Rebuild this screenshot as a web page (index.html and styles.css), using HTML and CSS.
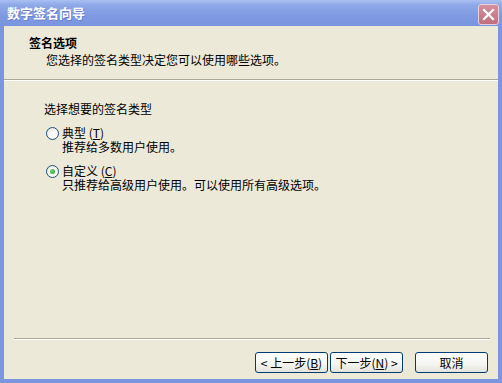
FILE: index.html
```html
<!DOCTYPE html>
<html lang="zh-CN">
<head>
    <meta charset="UTF-8">
    <title>数字签名向导</title>
    <link rel="stylesheet" href="styles.css">
</head>
<body>
    <div class="window">
        <div class="titlebar">
            <span class="title">数字签名向导</span>
            <span class="close">
                <svg width="13" height="13" viewBox="0 0 13 13">
                    <path d="M2 2 L11 11 M11 2 L2 11" stroke="#fff" stroke-width="2.2" stroke-linecap="square"/>
                </svg>
            </span>
        </div>
        <div class="frame">
            <div class="header">
                <h1>签名选项</h1>
                <p>您选择的签名类型决定您可以使用哪些选项。</p>
            </div>
            <div class="content">
                <p class="prompt">选择想要的签名类型</p>
                <label class="option">
                    <span class="radio"></span>
                    <span class="option-text">
                        <span>典型 (<u>T</u>)</span>
                        <span>推荐给多数用户使用。</span>
                    </span>
                </label>
                <label class="option">
                    <span class="radio checked"></span>
                    <span class="option-text">
                        <span>自定义 (<u>C</u>)</span>
                        <span>只推荐给高级用户使用。可以使用所有高级选项。</span>
                    </span>
                </label>
            </div>
            <div class="footer">
                <div class="separator"></div>
                <div class="buttons">
                    <button class="btn">&lt; 上一步(<u>B</u>)</button>
                    <button class="btn">下一步(<u>N</u>) &gt;</button>
                    <button class="btn cancel">取消</button>
                </div>
            </div>
        </div>
    </div>
</body>
</html>
```

FILE: styles.css
```css
body {
    margin: 0;
    padding: 0;
    font-family: "Noto Sans CJK SC", "Liberation Sans", sans-serif;
    font-size: 12px;
    color: #000;
}

.window {
    width: 502px;
    height: 383px;
    display: flex;
    flex-direction: column;
    overflow: hidden;
}

.titlebar {
    height: 26px;
    flex: none;
    display: flex;
    align-items: center;
    justify-content: space-between;
    padding: 0 3px 0 7px;
    background: linear-gradient(to bottom, #a9c0f0 0%, #8ea8e8 20%, #7f9ae1 60%, #7a95df 100%);
    box-sizing: border-box;
}

.title {
    color: #fff;
    font-size: 13px;
    font-weight: bold;
    text-shadow: 1px 1px 0 #6a82c8;
    margin-top: -1px;
}

.close {
    width: 19px;
    height: 19px;
    display: flex;
    align-items: center;
    justify-content: center;
    background: linear-gradient(to bottom, #d4909b, #c0707e);
    border: 1px solid #e8d0dc;
    border-radius: 3px;
    margin-top: 2px;
}

.frame {
    flex: 1;
    display: flex;
    flex-direction: column;
    background-color: #ece9d8;
    border: 4px solid #7b96df;
    border-top: none;
}

.header {
    height: 54px;
    flex: none;
    box-sizing: border-box;
    padding: 10px 0 0 25px;
    border-bottom: 1px solid #aca899;
    box-shadow: 0 1px 0 #fff;
}

.header h1 {
    margin: 0;
    font-size: 12px;
    line-height: 14px;
    font-weight: bold;
}

.header p {
    margin: 3px 0 0 17px;
    line-height: 14px;
}

.content {
    flex: 1;
    padding: 22px 0 0 40px;
}

.prompt {
    margin: 0;
    line-height: 14px;
}

.option {
    display: flex;
    align-items: flex-start;
    gap: 3px;
    margin: 10px 0 0 2px;
}

.option + .option {
    margin-top: 10px;
}

.option-text {
    display: flex;
    flex-direction: column;
    line-height: 14px;
}

.radio {
    width: 11px;
    height: 11px;
    margin-top: 1px;
    border: 1px solid #1c5180;
    border-radius: 50%;
    background: radial-gradient(circle at 60% 60%, #ffffff 30%, #dcdcd5 100%);
    display: flex;
    align-items: center;
    justify-content: center;
    flex: none;
}

.radio.checked::after {
    content: "";
    width: 5px;
    height: 5px;
    border-radius: 50%;
    background: radial-gradient(circle at 40% 40%, #6cd66c, #21a121);
}

.footer {
    flex: none;
    height: 41px;
}

.separator {
    margin: 0 8px 0 10px;
    border-top: 1px solid #aca899;
    border-bottom: 1px solid #fff;
}

.buttons {
    display: flex;
    justify-content: flex-end;
    gap: 2px;
    padding: 12px 10px 0 0;
}

.btn {
    width: 73px;
    height: 21px;
    padding: 0;
    font-family: inherit;
    font-size: 12px;
    line-height: 12px;
    color: #000;
    background: linear-gradient(to bottom, #ffffff 0%, #f4f4f0 60%, #e3e2da 100%);
    border: 1px solid #003c74;
    border-radius: 3px;
}

.cancel {
    margin-left: 10px;
}
```
